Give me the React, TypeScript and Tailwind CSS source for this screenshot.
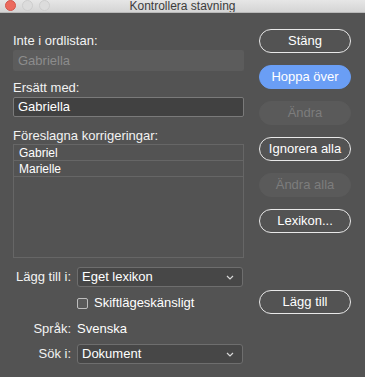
import React from "react";

const font = { fontFamily: '"Liberation Sans", Arial, sans-serif' };

function Btn({ label, kind }: { label: string; kind: "outline" | "primary" | "disabled" }) {
  const cls =
    kind === "primary"
      ? "bg-[#6a9ef5] text-white border border-[#6a9ef5]"
      : kind === "disabled"
      ? "bg-[#5a5a5a] text-[#7d7d7d] border border-[#5a5a5a]"
      : "bg-transparent text-white border border-[#e8e8e8]";
  return (
    <div className={`h-[24px] w-[92px] rounded-full flex items-center justify-center text-[13px] whitespace-nowrap ${cls}`}>
      {label}
    </div>
  );
}

function Select({ value }: { value: string }) {
  return (
    <div className="h-[20px] w-[166px] rounded-[3px] bg-[#474747] border border-[#6e6e6e] flex items-center justify-between pl-[4px] pr-[8px] text-[13px] text-white">
      <span>{value}</span>
      <svg width="8" height="5" viewBox="0 0 8 5">
        <path d="M1 1 L4 4 L7 1" fill="none" stroke="#d8d8d8" strokeWidth="1.2" />
      </svg>
    </div>
  );
}

export default function App() {
  return (
    <div className="w-[365px] h-[377px] bg-[#535353] flex flex-col overflow-hidden" style={font}>
      <div className="h-[13px] shrink-0 bg-gradient-to-b from-[#e6e6e6] to-[#d4d4d4] border-b border-[#b9b9b9] relative flex items-center justify-center overflow-hidden">
        <div className="absolute left-[5px] top-[0px] flex gap-[6px]">
          <div className="w-[11px] h-[11px] rounded-full bg-[#ec6a5e] border border-[#d3574c]" />
          <div className="w-[11px] h-[11px] rounded-full bg-[#dcdcdc] border border-[#cdcdcd]" />
          <div className="w-[11px] h-[11px] rounded-full bg-[#dcdcdc] border border-[#cdcdcd]" />
        </div>
        <span className="text-[12px] text-[#3c3c3c] leading-[12px]">Kontrollera stavning</span>
      </div>
      <div className="flex pl-[13px] gap-[15px]">
        <div className="w-[231px] flex flex-col text-[13px] text-[#f2f2f2]">
          <div className="mt-[20px] leading-[16px]">Inte i ordlistan:</div>
          <div className="mt-[1px] h-[21px] bg-[#5c5c5c] rounded-[2px] flex items-center pl-[5px] text-[#8c8c8c]">Gabriella</div>
          <div className="mt-[9px] leading-[16px]">Ersätt med:</div>
          <div className="mt-[1px] h-[20px] bg-[#414141] border border-[#7a7a7a] rounded-[2px] flex items-center pl-[4px] text-white">Gabriella</div>
          <div className="mt-[11px] leading-[16px]">Föreslagna korrigeringar:</div>
          <div className="h-[114px] w-[231px] border border-[#666666] flex flex-col text-white text-[12px]">
            <div className="h-[16px] border-b border-[#666666] flex items-center pl-[5px]">Gabriel</div>
            <div className="h-[16px] border-b border-[#666666] flex items-center pl-[5px]">Marielle</div>
          </div>
          <div className="mt-[9px] flex items-center gap-[6px]">
            <div className="w-[58px] text-right whitespace-nowrap">Lägg till i:</div>
            <Select value="Eget lexikon" />
          </div>
          <div className="mt-[8px] h-[16px] flex items-center gap-[6px] pl-[64px]">
            <div className="w-[11px] h-[11px] border border-[#bdbdbd] rounded-[2px] bg-[#5a5a5a]" />
            <span className="text-white">Skiftlägeskänsligt</span>
          </div>
          <div className="mt-[10px] flex items-center gap-[6px] h-[16px]">
            <div className="w-[58px] text-right whitespace-nowrap">Språk:</div>
            <span className="text-white">Svenska</span>
          </div>
          <div className="mt-[7px] flex items-center gap-[6px]">
            <div className="w-[58px] text-right whitespace-nowrap">Sök i:</div>
            <Select value="Dokument" />
          </div>
        </div>
        <div className="flex flex-col mt-[16px]">
          <div className="flex flex-col gap-[12px]">
            <Btn label="Stäng" kind="outline" />
            <Btn label="Hoppa över" kind="primary" />
            <Btn label="Ändra" kind="disabled" />
            <Btn label="Ignorera alla" kind="outline" />
            <Btn label="Ändra alla" kind="disabled" />
            <Btn label="Lexikon..." kind="outline" />
          </div>
          <div className="mt-[57px]">
            <Btn label="Lägg till" kind="outline" />
          </div>
        </div>
      </div>
    </div>
  );
}
